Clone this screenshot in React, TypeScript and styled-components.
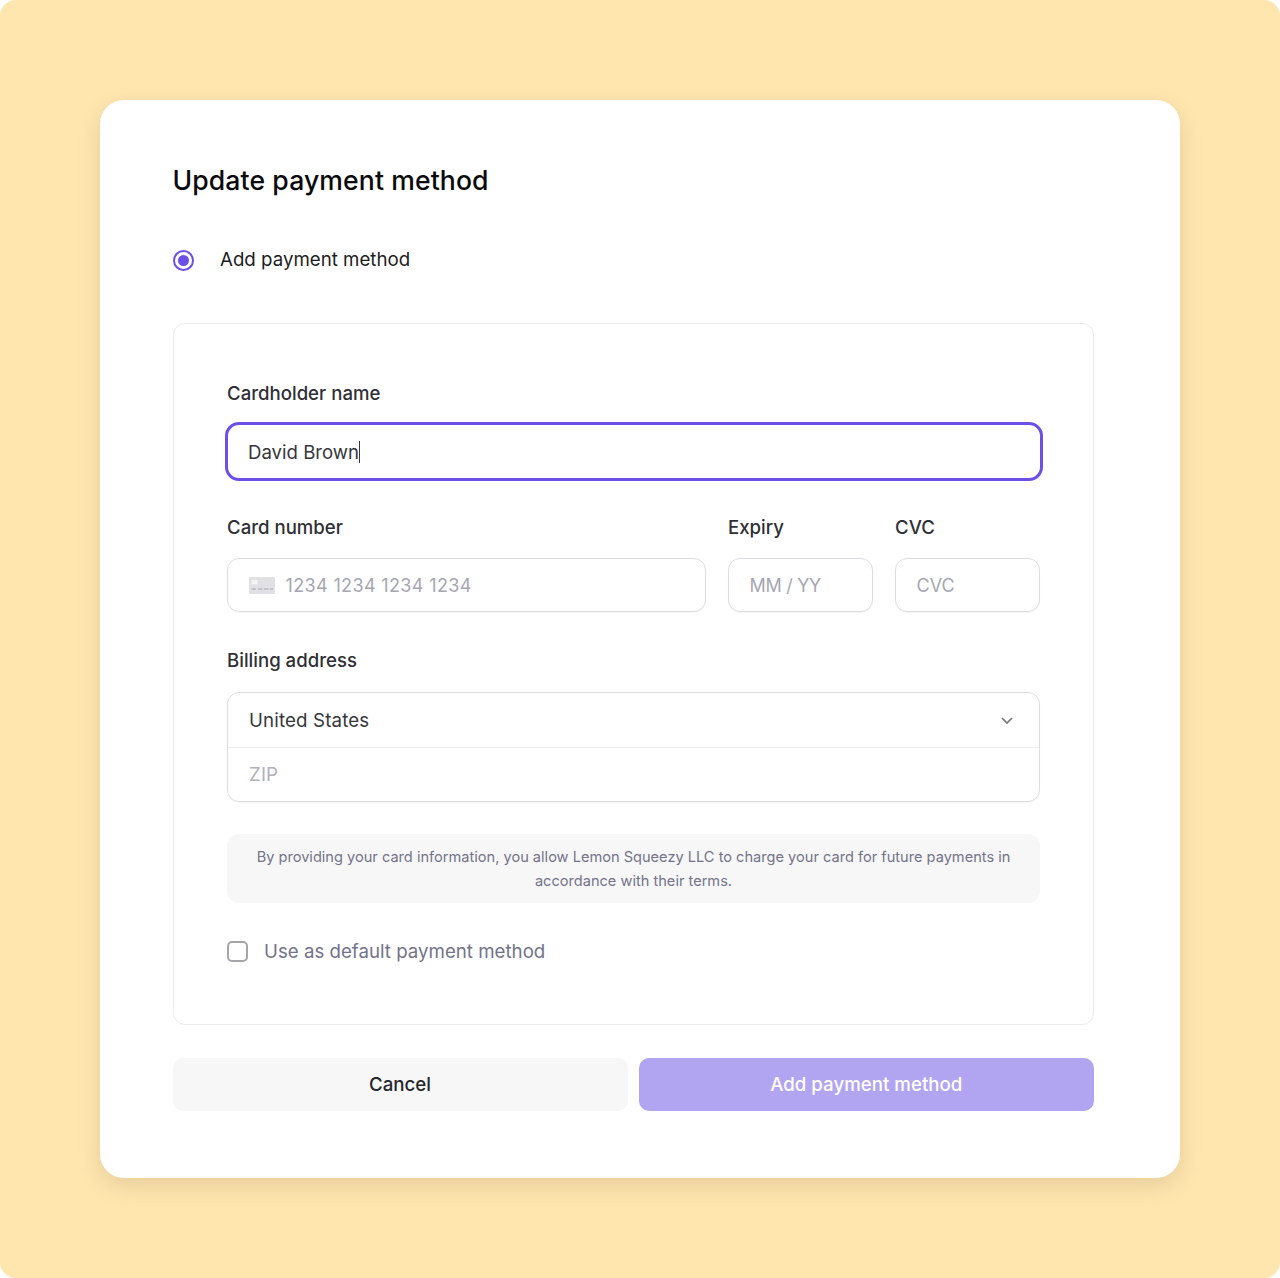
import React from "react";
import styled, { createGlobalStyle } from "styled-components";

const Global = createGlobalStyle`
  * { box-sizing: border-box; }
  html, body { margin: 0; padding: 0; }
  body { background: #fff; font-family: Inter, "Liberation Sans", sans-serif; }
`;

const Page = styled.div`
  width: 1280px;
  height: 1278px;
  padding: 100px;
  background: #ffe5ae;
  border-radius: 16px;
`;

const Dialog = styled.main`
  width: 1080px;
  height: 1078px;
  padding: 60px 86px 0 72.5px;
  background: #fff;
  border-radius: 24px;
  box-shadow: 0 8px 24px rgba(0, 0, 0, 0.1);
  display: flex;
  flex-direction: column;
`;

const Title = styled.h1`
  margin: 0;
  height: 40px;
  font-size: 26.6px;
  line-height: 41px;
  letter-spacing: 0.1px;
  font-weight: 500;
  color: #0a0a0c;
`;

const RadioRow = styled.label`
  margin-top: 48px;
  height: 24px;
  display: flex;
  align-items: center;
  gap: 26.5px;
  font-size: 18.7px;
  line-height: 24px;
  color: #1d1d22;
`;

const Radio = styled.span`
  width: 21px;
  height: 21px;
  margin-top: 1px;
  border-radius: 50%;
  border: 2px solid #6c4fe6;
  display: flex;
  align-items: center;
  justify-content: center;
  &::after {
    content: "";
    width: 11px;
    height: 11px;
    border-radius: 50%;
    background: #6c4fe6;
  }
`;

const Panel = styled.section`
  margin-top: 51px;
  height: 702px;
  padding: 56px 53px 0 53.5px;
  border: 1px solid #ebebee;
  border-radius: 12px;
  display: flex;
  flex-direction: column;
`;

const Label = styled.div`
  height: 26px;
  font-size: 18.6px;
  line-height: 26px;
  font-weight: 500;
  color: #2f2f35;
`;

const NameInput = styled.div`
  margin: 16px -2.5px 0;
  height: 59px;
  padding: 0 20.5px;
  border: 3px solid #6c4fe6;
  border-radius: 14px;
  display: flex;
  align-items: center;
  font-size: 18.6px;
  color: #36363c;
`;

const Caret = styled.span`
  width: 1px;
  height: 22px;
  background: #36363c;
`;

const CardRow = styled.div`
  margin-top: 33px;
  display: grid;
  grid-template-columns: 479px 145px 145px;
  column-gap: 22px;
`;

const Field = styled.div`
  display: flex;
  flex-direction: column;
`;

const TextBox = styled.div`
  margin-top: 18px;
  height: 54px;
  padding: 0 20.5px;
  border: 1.5px solid #dddde1;
  border-radius: 12px;
  box-shadow: 0 1px 1px rgba(0, 0, 0, 0.04);
  display: flex;
  align-items: center;
  font-size: 18px;
  color: #a6a6b2;
`;

const CardNumberBox = styled(TextBox)`
  gap: 11px;
  letter-spacing: 0.36px;
`;

const ExpiryBox = styled(TextBox)`
  letter-spacing: -0.3px;
`;

const BillingLabel = styled(Label)`
  margin-top: 35px;
`;

const AddressBox = styled.div`
  margin-top: 19px;
  height: 110px;
  border: 1.5px solid #dddde1;
  border-radius: 12px;
  box-shadow: 0 1px 1px rgba(0, 0, 0, 0.04);
  display: flex;
  flex-direction: column;
`;

const AddressRow = styled.div<{ $muted?: boolean }>`
  flex: 1;
  padding: 1px 25px 0 21px;
  display: flex;
  align-items: center;
  justify-content: space-between;
  font-size: 18.7px;
  letter-spacing: 0.15px;
  color: ${(p) => (p.$muted ? "#b1b1bb" : "#36363c")};
  & + & {
    border-top: 1.5px solid #efeff1;
  }
`;

const Notice = styled.p`
  margin: 32px 0 0;
  height: 69px;
  padding: 11px 24px;
  background: #f7f7f8;
  border-radius: 12px;
  text-align: center;
  font-size: 14.6px;
  line-height: 24px;
  color: #73738a;
`;

const CheckRow = styled.label`
  margin-top: 38px;
  height: 21px;
  display: flex;
  align-items: center;
  gap: 16px;
  font-size: 18.7px;
  color: #73738a;
`;

const CheckBox = styled.span`
  width: 21px;
  height: 21px;
  border: 2px solid #a5a5ab;
  border-radius: 5px;
`;

const Actions = styled.div`
  margin-top: 33px;
  display: grid;
  grid-template-columns: 455px 455.5px;
  column-gap: 11px;
`;

const Button = styled.button<{ $primary?: boolean }>`
  height: 52.5px;
  border: 0;
  border-radius: 10px;
  background: ${(p) => (p.$primary ? "#b1a4f1" : "#f7f7f8")};
  color: ${(p) => (p.$primary ? "#fff" : "#26262b")};
  font-family: inherit;
  font-size: 18.7px;
  font-weight: 500;
`;

const CardIcon = () => (
  <svg width="26" height="17" viewBox="0 0 26 17" aria-hidden="true">
    <rect width="26" height="17" rx="1.5" fill="#e0e0e5" />
    <rect x="2.5" y="3" width="6" height="4.5" rx="0.5" fill="#f4f4f6" />
    <path d="M2.5 12h4.5M9 12h4.5M15 12h4.5M21 12h3" stroke="#b9b9c2" strokeWidth="1.5" />
  </svg>
);

const Chevron = () => (
  <svg width="14" height="9" viewBox="0 0 14 9" aria-hidden="true">
    <path d="M2 2l5 5 5-5" fill="none" stroke="#76767e" strokeWidth="1.7" />
  </svg>
);

export default function App() {
  return (
    <Page>
      <Global />
      <Dialog>
        <Title>Update payment method</Title>
        <RadioRow>
          <Radio />
          Add payment method
        </RadioRow>
        <Panel>
          <Label>Cardholder name</Label>
          <NameInput>
            David Brown
            <Caret />
          </NameInput>
          <CardRow>
            <Field>
              <Label>Card number</Label>
              <CardNumberBox>
                <CardIcon />
                1234 1234 1234 1234
              </CardNumberBox>
            </Field>
            <Field>
              <Label>Expiry</Label>
              <ExpiryBox>MM / YY</ExpiryBox>
            </Field>
            <Field>
              <Label>CVC</Label>
              <TextBox>CVC</TextBox>
            </Field>
          </CardRow>
          <BillingLabel>Billing address</BillingLabel>
          <AddressBox>
            <AddressRow>
              United States
              <Chevron />
            </AddressRow>
            <AddressRow $muted>ZIP</AddressRow>
          </AddressBox>
          <Notice>
            By providing your card information, you allow Lemon Squeezy LLC to charge your card for future payments in accordance with their terms.
          </Notice>
          <CheckRow>
            <CheckBox />
            Use as default payment method
          </CheckRow>
        </Panel>
        <Actions>
          <Button>Cancel</Button>
          <Button $primary>Add payment method</Button>
        </Actions>
      </Dialog>
    </Page>
  );
}
